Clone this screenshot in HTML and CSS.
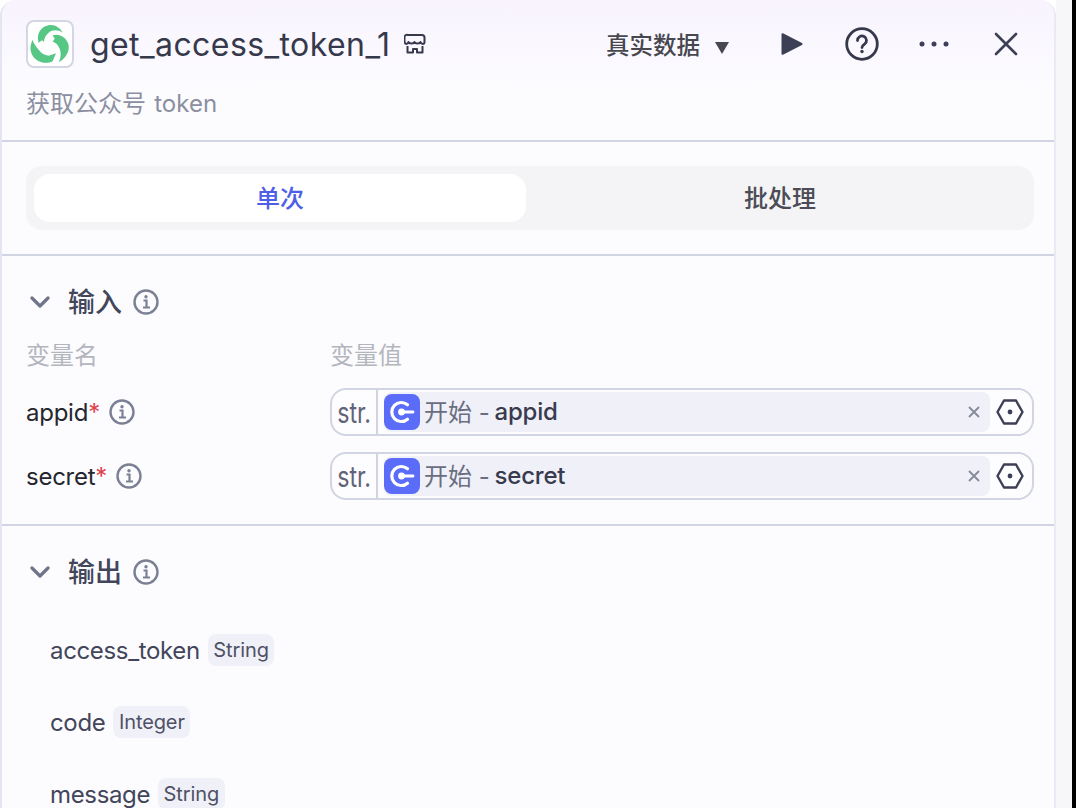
FILE: index.html
```html
<!DOCTYPE html>
<html lang="en">
<head>
    <meta charset="UTF-8">
    <title>get_access_token_1</title>
    <link rel="stylesheet" href="styles.css">
</head>
<body>
    <div class="page">
        <div class="panel">
            <div class="header">
                <div class="title-row">
                    <div class="logo">
                        <svg viewBox="24 24 132 132" width="44" height="44">
                            <path fill="#57c785" d="M56 86C48 62 60 38 88 33c18-2 32 8 40 23-14-9-30-10-42 0-9 7-14 17-14 28l-6-5z"/>
                            <path fill="#57c785" d="M98 64c20-6 40 6 47 26 6 20-8 44-29 55 7-13 9-32 0-47-4-8-10-13-18-15l6-9z"/>
                            <path fill="#57c785" d="M38 78c-9 16-9 36 2 50 13 17 38 24 58 14l10-24-22 7c-12-2-22-6-30-18-8-9-15-18-18-29z"/>
                        </svg>
                    </div>
                    <div class="node-name">get_access_token_1</div>
                    <svg class="shop-icon" viewBox="0 0 22 22" width="22" height="22" fill="none" stroke="#36384b" stroke-width="2" stroke-linejoin="round">
                        <path d="M4 2h14a2.500 2.500 0 0 1 2.500 2.500V9c0 2.500-3.500 2.500-4 0-.5 2-5.500 2-6 0-.5 2-5.500 2-6 0-.5 2.500-3.500 2.500-4 0V4.500A2.500 2.500 0 0 1 4 2z"/>
                        <path d="M3.500 13v6.500h5.500V16h4v3.500h5.500V13"/>
                    </svg>
                    <div class="spacer"></div>
                    <div class="data-mode">真实数据<span class="caret"></span></div>
                    <div class="actions">
                        <svg class="play-icon" viewBox="0 0 22 22" width="22" height="22"><path fill="#3c3f55" stroke="#3c3f55" stroke-width="2" stroke-linejoin="round" d="M1.500 1.200 20.500 11 1.500 20.800z"/></svg>
                        <svg class="help-icon" viewBox="0 0 34 34" width="34" height="34" fill="none" stroke="#36384b">
                            <circle cx="17" cy="17" r="15.300" stroke-width="2.800"/>
                            <path stroke-width="2.800" stroke-linecap="round" d="M12.500 13.500a4.500 4.500 0 1 1 7 3.700c-1.600 1.100-2.500 1.800-2.500 3.300"/>
                            <circle cx="17" cy="24.500" r="1.700" fill="#36384b" stroke="none"/>
                        </svg>
                        <svg class="more-icon" viewBox="0 0 30 6" width="30" height="6" fill="#3c3f55"><circle cx="3" cy="3" r="2.500"/><circle cx="15" cy="3" r="2.500"/><circle cx="27" cy="3" r="2.500"/></svg>
                        <svg class="close-icon" viewBox="0 0 24 24" width="24" height="24" stroke="#3c3f55" stroke-width="2.600" stroke-linecap="round"><path d="M2 2l20 20M22 2 2 22"/></svg>
                    </div>
                </div>
                <div class="node-desc">获取公众号 token</div>
            </div>

            <div class="section tabs-section">
                <div class="tabs">
                    <div class="tab active">单次</div>
                    <div class="tab">批处理</div>
                </div>
            </div>

            <div class="section">
                <div class="section-head">
                    <svg class="chevron" viewBox="0 0 20 12" width="20" height="12" fill="none" stroke="#6f7488" stroke-width="3.200" stroke-linecap="round" stroke-linejoin="round"><path d="M2 2l8 8 8-8"/></svg>
                    <span class="section-title">输入</span>
                    <svg class="info" viewBox="0 0 26 26" width="26" height="26"><use href="#info-glyph"/></svg>
                </div>
                <div class="param-grid col-heads">
                    <div>变量名</div>
                    <div>变量值</div>
                </div>
                <div class="param-grid param-row">
                    <div class="param-name">appid<span class="req">*</span><svg class="info" viewBox="0 0 26 26" width="26" height="26"><use href="#info-glyph"/></svg></div>
                    <div class="value-box">
                        <div class="type-tag"><span>str.</span></div>
                        <div class="ref-pill">
                            <svg class="start-icon" viewBox="0 0 36 36" width="36" height="36"><use href="#start-glyph"/></svg>
                            <span class="ref-node">开始 - </span><span class="ref-var">appid</span>
                            <svg class="pill-close" viewBox="0 0 12 12" width="12" height="12" stroke="#85889a" stroke-width="1.800"><path d="M1 1l10 10M11 1 1 11"/></svg>
                        </div>
                        <svg class="hex-icon" viewBox="0 0 28 26" width="28" height="26"><use href="#hex-glyph"/></svg>
                    </div>
                </div>
                <div class="param-grid param-row">
                    <div class="param-name">secret<span class="req">*</span><svg class="info" viewBox="0 0 26 26" width="26" height="26"><use href="#info-glyph"/></svg></div>
                    <div class="value-box">
                        <div class="type-tag"><span>str.</span></div>
                        <div class="ref-pill">
                            <svg class="start-icon" viewBox="0 0 36 36" width="36" height="36"><use href="#start-glyph"/></svg>
                            <span class="ref-node">开始 - </span><span class="ref-var">secret</span>
                            <svg class="pill-close" viewBox="0 0 12 12" width="12" height="12" stroke="#85889a" stroke-width="1.800"><path d="M1 1l10 10M11 1 1 11"/></svg>
                        </div>
                        <svg class="hex-icon" viewBox="0 0 28 26" width="28" height="26"><use href="#hex-glyph"/></svg>
                    </div>
                </div>
            </div>

            <div class="section output-section">
                <div class="section-head">
                    <svg class="chevron" viewBox="0 0 20 12" width="20" height="12" fill="none" stroke="#6f7488" stroke-width="3.200" stroke-linecap="round" stroke-linejoin="round"><path d="M2 2l8 8 8-8"/></svg>
                    <span class="section-title">输出</span>
                    <svg class="info" viewBox="0 0 26 26" width="26" height="26"><use href="#info-glyph"/></svg>
                </div>
                <div class="output-list">
                    <div class="output-item">access_token<span class="out-type">String</span></div>
                    <div class="output-item">code<span class="out-type">Integer</span></div>
                    <div class="output-item">message<span class="out-type">String</span></div>
                </div>
            </div>
        </div>
        <div class="gutter"></div>
    </div>

    <svg class="glyph-defs" width="0" height="0">
        <defs>
            <g id="info-glyph">
                <circle cx="13" cy="13" r="11.500" fill="none" stroke="#7b8094" stroke-width="2.400"/>
                <circle cx="13" cy="7.800" r="1.700" fill="#7b8094"/>
                <path fill="none" stroke="#7b8094" stroke-width="2.200" d="M10.500 11.500H13.500V18.500M10 18.500h7"/>
            </g>
            <g id="start-glyph">
                <rect width="36" height="36" rx="8" fill="#5b6cf9"/>
                <path fill="none" stroke="#fff" stroke-width="3.200" stroke-linecap="round" d="M23.500 10.800a9.500 9.500 0 1 0 0 14.400"/>
                <circle cx="17.500" cy="18" r="3.400" fill="#fff"/>
                <path stroke="#fff" stroke-width="2.800" stroke-linecap="round" d="M19 18h10"/>
            </g>
            <g id="hex-glyph">
                <path fill="none" stroke="#3c3f55" stroke-width="2.400" stroke-linejoin="round" d="M8 1.500h12l6.500 11.500L20 24.500H8L1.500 13z"/>
                <circle cx="14" cy="13" r="2.400" fill="#3c3f55"/>
            </g>
        </defs>
    </svg>
</body>
</html>
```

FILE: styles.css
```css
html, body {
    margin: 0;
    height: 100%;
    background: #000;
    overflow: hidden;
}
body {
    font-family: Inter, "Noto Sans CJK SC", sans-serif;
    color: #36384b;
}
.page {
    display: flex;
    width: 1072px;
    height: 808px;
    background: #fff;
}
.panel {
    width: 1052px;
    border-left: 2px solid #e3e6f1;
    border-right: 2px solid #e9eaf3;
    border-radius: 16px 16px 0 0;
    background: #fcfcff;
    overflow: hidden;
    flex-shrink: 0;
}
.gutter {
    flex: 1;
    background: #f7f7f9;
}
.glyph-defs {
    position: absolute;
}

/* header */
.header {
    height: 142px;
    box-sizing: border-box;
    background: linear-gradient(180deg, #f8f3fe 0%, #fcfcff 62%);
    border-bottom: 2px solid #d1d4e3;
    padding: 0 20px 0 24px;
}
.title-row {
    display: flex;
    align-items: center;
    height: 48px;
    padding-top: 20px;
}
.logo {
    width: 44px;
    height: 44px;
    border: 2px solid #d3d6e3;
    border-radius: 8px;
    background: #fff;
}
.logo svg {
    display: block;
}
.node-name {
    margin-left: 16px;
    font-size: 32px;
    font-weight: 400;
    letter-spacing: 0.420px;
    color: #36384b;
}
.shop-icon {
    margin-left: 14px;
}
.spacer {
    flex: 1;
}
.data-mode {
    display: flex;
    align-items: center;
    font-size: 23.500px;
    font-weight: 500;
    color: #47484f;
}
.caret {
    margin-left: 15px;
    margin-top: 7px;
    border-left: 7.500px solid transparent;
    border-right: 7.500px solid transparent;
    border-top: 12px solid #47484f;
}
.actions {
    display: flex;
    align-items: center;
    margin-left: 52px;
    gap: 43px;
    padding-right: 16px;
}
.actions svg {
    display: block;
}
.help-icon {
    margin-left: -1px;
    margin-right: -2px;
}
.more-icon {
    margin-left: -1px;
    margin-right: 2px;
}
.node-desc {
    margin-top: 20px;
    font-size: 24px;
    line-height: 32px;
    word-spacing: 1.500px;
    color: #8b8f9f;
}

/* sections */
.section {
    border-bottom: 2px solid #d1d4e3;
    padding: 30px 20px 24px 24px;
}
.output-section {
    border-bottom: none;
}
.tabs-section {
    padding-top: 24px;
}
.tabs {
    display: flex;
    height: 64px;
    padding: 8px;
    box-sizing: border-box;
    background: #f4f4f6;
    border-radius: 16px;
}
.tab {
    flex: 1;
    display: flex;
    align-items: center;
    justify-content: center;
    padding: 0 0 3px 8px;
    border-radius: 16px;
    font-size: 24px;
    font-weight: 500;
    color: #4b4c55;
}
.tab.active {
    flex: none;
    width: 492px;
    padding-left: 0;
    background: #fff;
    color: #4e5fe6;
}
.section-head {
    display: flex;
    align-items: center;
    height: 32px;
    padding-left: 4px;
}
.chevron {
    flex-shrink: 0;
}
.section-title {
    margin-left: 18px;
    padding-bottom: 3px;
    font-size: 27px;
    font-weight: 500;
    color: #43465a;
}
.section-head .info {
    margin-left: 11px;
}
.param-grid {
    display: grid;
    grid-template-columns: 304px 1fr;
}
.col-heads {
    margin-top: 22px;
    height: 32px;
    line-height: 32px;
    font-size: 24px;
    color: #b4b6bd;
}
.param-row {
    margin-top: 16px;
    height: 48px;
    align-items: center;
}
.param-name {
    display: flex;
    align-items: center;
    font-size: 24px;
    letter-spacing: -0.250px;
    color: #25262e;
}
.req {
    color: #e0424c;
    font-size: 24px;
}
.param-name .info {
    margin-left: 9px;
}
.value-box {
    display: flex;
    align-items: center;
    height: 48px;
    box-sizing: border-box;
    border: 2px solid #d1d4e3;
    border-radius: 16px;
    background: #fdfdff;
}
.type-tag {
    width: 44px;
    height: 100%;
    flex-shrink: 0;
    display: flex;
    align-items: center;
    justify-content: center;
    border-right: 2px solid #d1d4e3;
    font-size: 29px;
    color: #60637a;
}
.type-tag span {
    display: block;
    transform: scaleX(0.8);
}
.ref-pill {
    flex: 1;
    display: flex;
    align-items: center;
    height: 40px;
    margin-left: 6px;
    border-radius: 8px;
    background: #eff0f8;
    font-size: 24px;
}
.start-icon {
    flex-shrink: 0;
}
.ref-node {
    margin-left: 4px;
    padding-bottom: 3px;
    white-space: pre;
    color: #6a6e81;
}
.ref-var {
    margin-left: -2px;
    padding-bottom: 2px;
    font-weight: 500;
    letter-spacing: -0.200px;
    color: #383a4e;
}
.pill-close {
    margin-left: auto;
    margin-right: 10px;
}
.hex-icon {
    margin: 0 8px 0 6px;
    flex-shrink: 0;
}

/* output list */
.output-list {
    margin-top: 26px;
    padding-left: 24px;
}
.output-item {
    display: flex;
    align-items: center;
    height: 72px;
    font-size: 24px;
    letter-spacing: -0.350px;
    color: #43465a;
}
.out-type {
    margin-left: 8px;
    height: 32px;
    line-height: 32px;
    padding: 0 5.500px;
    border-radius: 8px;
    background: #f0f0f8;
    font-size: 20px;
    letter-spacing: -0.100px;
    color: #4e5165;
}
```
